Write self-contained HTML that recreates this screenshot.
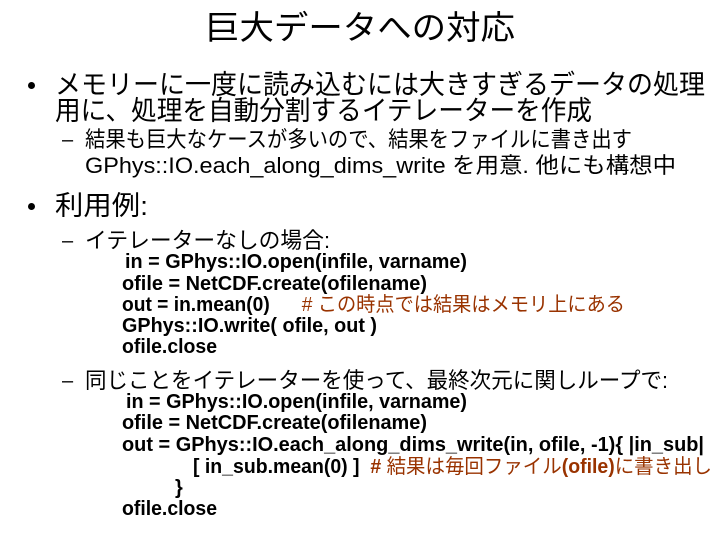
<!DOCTYPE html>
<html><head><meta charset="utf-8"><style>
body{margin:0;width:720px;height:540px;background:#fff;overflow:hidden;position:relative;font-family:"Liberation Sans","Noto Sans CJK JP",sans-serif;color:#000}
.l{position:absolute;white-space:nowrap;transform-origin:0 50%;line-height:1}
.b{font-weight:bold}
.c{color:#993300;font-weight:normal}
.cb{color:#993300}
.d{position:absolute;width:7px;height:7px;border-radius:50%;background:#000}
</style></head><body>
<div class="l" style="left:205px;top:11px;font-size:33px" data-w="310">巨大データへの対応</div>
<div class="d" style="left:28px;top:82px"></div>
<div class="l" style="left:55px;top:72px;font-size:27px" data-w="650">メモリーに一度に読み込むには大きすぎるデータの処理</div>
<div class="l" style="left:55px;top:98px;font-size:27px" data-w="537">用に、処理を自動分割するイテレーターを作成</div>
<div class="l" style="left:62px;top:130px;font-size:20px">–</div>
<div class="l" style="left:85px;top:129px;font-size:22px" data-w="547">結果も巨大なケースが多いので、結果をファイルに書き出す</div>
<div class="l" style="left:85px;top:155px;font-size:22px" data-w="591">GPhys::IO.each_along_dims_write を用意. 他にも構想中</div>
<div class="d" style="left:28px;top:203px"></div>
<div class="l" style="left:55px;top:193px;font-size:27px" data-w="93">利用例:</div>
<div class="l" style="left:62px;top:231px;font-size:20px">–</div>
<div class="l" style="left:85px;top:230px;font-size:22px" data-w="245">イテレーターなしの場合:</div>
<div class="l b" style="left:125px;top:252px;font-size:20px" data-w="342">in = GPhys::IO.open(infile, varname)</div>
<div class="l b" style="left:122px;top:274px;font-size:20px" data-w="305">ofile = NetCDF.create(ofilename)</div>
<div class="l b" style="left:122px;top:295px;font-size:20px" data-w="503">out = in.mean(0)&nbsp;&nbsp;&nbsp;&nbsp;&nbsp; <span class="c"># この時点では結果はメモリ上にある</span></div>
<div class="l b" style="left:122px;top:316px;font-size:20px" data-w="255">GPhys::IO.write( ofile, out )</div>
<div class="l b" style="left:122px;top:337px;font-size:20px" data-w="95">ofile.close</div>
<div class="l" style="left:62px;top:371px;font-size:20px">–</div>
<div class="l" style="left:85px;top:370px;font-size:22px" data-w="583">同じことをイテレーターを使って、最終次元に関しループで:</div>
<div class="l b" style="left:126px;top:392px;font-size:20px" data-w="341">in = GPhys::IO.open(infile, varname)</div>
<div class="l b" style="left:122px;top:413px;font-size:20px" data-w="305">ofile = NetCDF.create(ofilename)</div>
<div class="l b" style="left:122px;top:435px;font-size:20px" data-w="582">out = GPhys::IO.each_along_dims_write(in, ofile, -1){ |in_sub|</div>
<div class="l b" style="left:193px;top:457px;font-size:20px" data-w="519">[ in_sub.mean(0) ]&nbsp; <span class="cb"># <span style="font-weight:normal">結果は毎回ファイル</span>(ofile)<span style="font-weight:normal">に書き出し</span></span></div>
<div class="l b" style="left:175px;top:478px;font-size:20px">}</div>
<div class="l b" style="left:122px;top:499px;font-size:20px" data-w="95">ofile.close</div>
<script>
document.querySelectorAll('[data-w]').forEach(function(e){var w=e.getBoundingClientRect().width;var t=+e.getAttribute('data-w');if(w>0)e.style.transform='scaleX('+(t/w)+')';});
</script>
</body></html>
